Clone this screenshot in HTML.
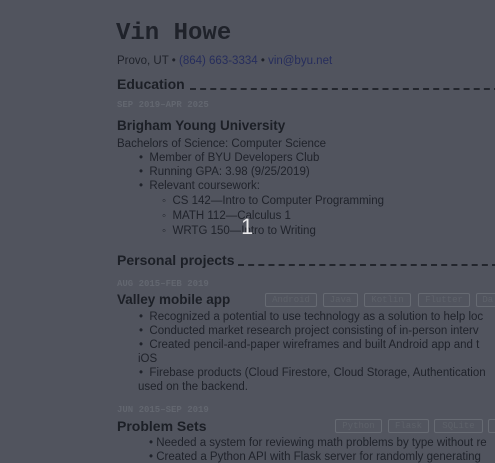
<!DOCTYPE html><html><head><style>
body{margin:0;width:495px;height:459px;overflow:hidden;background:#51545e;font-family:"Liberation Sans",sans-serif;color:#1e2128;position:relative}
.a{position:absolute;white-space:nowrap}
.m{font-family:"Liberation Mono",monospace}
.d{font-size:9px;color:#62666f;font-weight:bold;font-family:"Liberation Mono",monospace}
.h{font-size:13.5px;font-weight:bold;color:#1c1f26}
.b{font-size:11.5px;color:#1f222a}
.t{position:absolute;height:12px;border:1px solid #666a72;border-radius:2px;font-family:"Liberation Mono",monospace;font-size:9px;color:#5d6169;line-height:12px;text-align:center;top:293px}
.dash{position:absolute;height:0;border-top:2px dashed #23262d}
</style></head><body>
<div class="a m" style="left:116px;top:20px;font-size:24px;font-weight:bold;color:#1f222a">Vin Howe</div>
<div class="a b" style="left:117px;top:55px">Provo, UT • <span style="color:#262d5c">(864) 663-3334</span> • <span style="color:#262d5c">vin@byu.net</span></div>
<div class="a h" style="left:117px;top:76px;font-size:14px">Education</div>
<div class="dash" style="left:190px;top:88px;width:310px"></div>
<div class="a d" style="left:117px;top:100px">SEP 2019–APR 2025</div>
<div class="a h" style="left:117px;top:118px">Brigham Young University</div>
<div class="a b" style="left:117px;top:138px">Bachelors of Science: Computer Science</div>
<div class="a b" style="left:139px;top:152px">•&nbsp;&nbsp;Member of BYU Developers Club</div>
<div class="a b" style="left:139px;top:166px">•&nbsp;&nbsp;Running GPA: 3.98 (9/25/2019)</div>
<div class="a b" style="left:139px;top:180px">•&nbsp;&nbsp;Relevant coursework:</div>
<div class="a b" style="left:162px;top:195px">◦&nbsp;&nbsp;CS 142—Intro to Computer Programming</div>
<div class="a b" style="left:162px;top:210px">◦&nbsp;&nbsp;MATH 112—Calculus 1</div>
<div class="a b" style="left:162px;top:225px">◦&nbsp;&nbsp;WRTG 150—Intro to Writing</div>
<div class="a" style="left:241px;top:214px;font-size:22px;color:#e8e8ea">1</div>
<div class="a h" style="left:117px;top:252px;font-size:14px">Personal projects</div>
<div class="dash" style="left:238px;top:264px;width:260px"></div>
<div class="a d" style="left:117px;top:279px">AUG 2015–FEB 2019</div>
<div class="a h" style="left:117px;top:292px">Valley mobile app</div>
<div class="t" style="left:265px;width:50px">Android</div>
<div class="t" style="left:323px;width:33px">Java</div>
<div class="t" style="left:364px;width:45px">Kotlin</div>
<div class="t" style="left:418px;width:50px">Flutter</div>
<div class="t" style="left:476px;width:40px;text-align:left">&nbsp;Da</div>
<div class="a b" style="left:139px;top:311px">•&nbsp;&nbsp;Recognized a potential to use technology as a solution to help loc</div>
<div class="a b" style="left:139px;top:325px">•&nbsp;&nbsp;Conducted market research project consisting of in-person interv</div>
<div class="a b" style="left:139px;top:339px">•&nbsp;&nbsp;Created pencil-and-paper wireframes and built Android app and t</div>
<div class="a b" style="left:138px;top:353px">iOS</div>
<div class="a b" style="left:139px;top:367px">•&nbsp;&nbsp;Firebase products (Cloud Firestore, Cloud Storage, Authentication</div>
<div class="a b" style="left:138px;top:381px">used on the backend.</div>
<div class="a d" style="left:117px;top:405px">JUN 2015–SEP 2019</div>
<div class="a h" style="left:117px;top:418px;font-size:14px">Problem Sets</div>
<div class="t" style="left:335px;width:45px;top:419px">Python</div>
<div class="t" style="left:388px;width:39px;top:419px">Flask</div>
<div class="t" style="left:434px;width:47px;top:419px">SQLite</div>
<div class="t" style="left:488px;width:20px;top:419px"></div>
<div class="a b" style="left:149px;top:437px">•&nbsp;Needed a system for reviewing math problems by type without re</div>
<div class="a b" style="left:149px;top:451px">•&nbsp;Created a Python API with Flask server for randomly generating</div>
</body></html>
